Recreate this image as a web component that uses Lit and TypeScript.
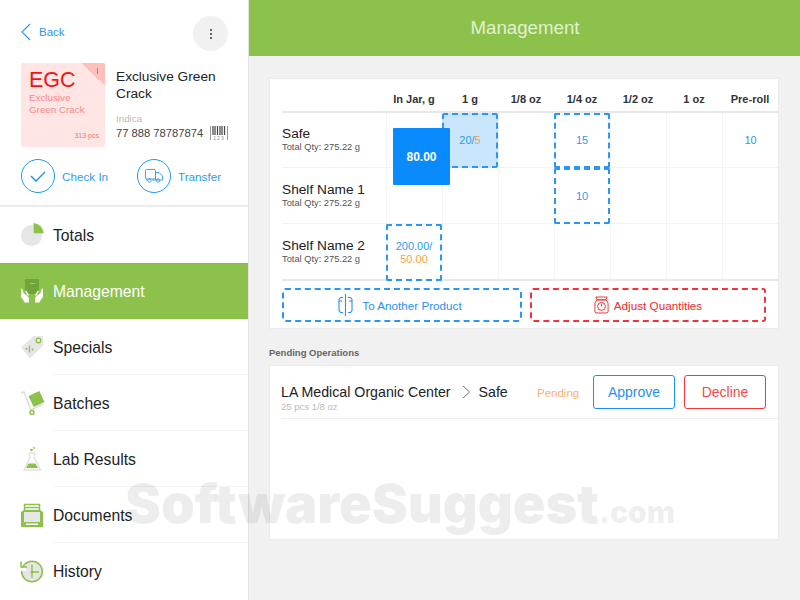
import { LitElement, html, css, svg } from "lit";
import { customElement } from "lit/decorators.js";

const icons: Record<string, unknown> = {
  totals: svg`<circle cx="11.5" cy="13.5" r="10.5" fill="#e6e6e6"/><path d="M13 1.500a10.500 10.500 0 0 1 10 10.500H13z" fill="#fff"/><path d="M13.500 1a10.500 10.500 0 0 1 10 10.500h-10z" fill="#8cc24b"/>`,
  management: svg`<rect x="5" y="1" width="14" height="15" fill="#6ea63a"/><rect x="10" y="5" width="5" height="1" fill="#9cc872"/>
    <path d="M1 10.500 2.500 11l1 4 3.500 2.500 2 2.500v4.500H4.500l-1.500-3-2-2.500z" fill="#fff"/><path d="M5 13.500l1.200-1 2.800 4.500-1.200.8z" fill="#fff"/>
    <path d="M23 10.500 21.500 11l-1 4-3.500 2.500-2 2.500v4.500h4.500l1.500-3 2-2.500z" fill="#fff"/><path d="M19 13.500l-1.200-1-2.800 4.500 1.200.8z" fill="#fff"/>`,
  specials: svg`<path d="M1 13.500 13.500 2h9.500v9.500L10 24.500z" fill="#e6e6e6"/><circle cx="18.500" cy="6.500" r="2.200" fill="#fff" stroke="#8cc24b" stroke-width="1.500"/>
    <path d="M9.500 11.500v7" stroke="#8cc24b" stroke-width="1.200"/><circle cx="6.500" cy="14.800" r="1" fill="#8cc24b"/><circle cx="12.500" cy="15.500" r="1" fill="#8cc24b"/>`,
  batches: svg`<path d="M1 3l3-1 7 18 12-6" fill="none" stroke="#dcdcdc" stroke-width="1.500"/><rect x="10.500" y="3" width="12" height="12" fill="#8cc24b" transform="rotate(-25 16.500 9)"/><circle cx="12" cy="22.500" r="2" fill="#fff" stroke="#8cc24b" stroke-width="1.500"/>`,
  lab: svg`<path d="M9.500 7h5v5l6 12H4l5.500-11.500z" fill="#fff" stroke="#e2e2e2" stroke-width="1.500"/><path d="M8.500 17.500h7l2.500 4.500H6z" fill="#8cc24b"/><circle cx="11.500" cy="4" r="1.300" fill="#8cc24b"/><circle cx="14" cy="2" r="0.900" fill="#8cc24b"/>`,
  documents: svg`<path d="M4.500 2.500h15v6h-15z" fill="#fff" stroke="#8cc24b" stroke-width="1.500"/><path d="M4.500 5.500h15" stroke="#8cc24b" stroke-width="1.500"/><path d="M1 10l3-2h16l3 2v15H1z" fill="#8cc24b"/><rect x="4" y="10" width="16" height="10" fill="#e6e6e6"/><rect x="6" y="21.500" width="12" height="1.500" fill="#fff"/>`,
  history: svg`<circle cx="12" cy="13.500" r="10.300" fill="#e6e6e6" stroke="#8cc24b" stroke-width="1.600"/><rect x="0" y="9.500" width="6" height="3.500" fill="#fff"/><path d="M12 6.500v7.500h7M12 14v6" fill="none" stroke="#8cc24b" stroke-width="1.300"/><circle cx="12" cy="14" r="1.500" fill="#8cc24b"/><path d="M1 3.500v5.500h6" fill="none" stroke="#8cc24b" stroke-width="1.500"/>`,
};

const nav = [
  ["totals", "Totals"],
  ["management", "Management"],
  ["specials", "Specials"],
  ["batches", "Batches"],
  ["lab", "Lab Results"],
  ["documents", "Documents"],
  ["history", "History"],
];

const columns = ["In Jar, g", "1 g", "1/8 oz", "1/4 oz", "1/2 oz", "1 oz", "Pre-roll"];

type Cell = { a?: string; b?: string; sep?: string; dash?: boolean; fill?: boolean };
const rows: { name: string; cells: Cell[] }[] = [
  { name: "Safe", cells: [{}, { a: "20", sep: "/", b: "5", dash: true, fill: true }, {}, { a: "15", dash: true }, {}, {}, { a: "10" }] },
  { name: "Shelf Name 1", cells: [{}, {}, {}, { a: "10", dash: true }, {}, {}, {}] },
  { name: "Shelf Name 2", cells: [{ a: "200.00/", b: "50.00", dash: true }, {}, {}, {}, {}, {}, {}] },
];

@customElement("app-root")
export class AppRoot extends LitElement {
  static styles = css`
    :host { display: block; width: 800px; height: 600px; overflow: hidden; position: relative; font-family: "Liberation Sans", Arial, sans-serif; color: #222; background: #f1f1f1; }
    * { box-sizing: border-box; }
    .page { display: flex; height: 600px; }
    .side { width: 249px; flex: none; background: #fff; border-right: 1px solid #e4e4e4; display: flex; flex-direction: column; }
    .hero { height: 207px; border-bottom: 2px solid #ececec; padding: 16px 20px 0 21px; display: flex; flex-direction: column; }
    .top { display: flex; justify-content: space-between; align-items: center; height: 35px; }
    .back { display: flex; align-items: center; gap: 8px; color: #2a96f2; font-size: 11.500px; margin-top: -3px; }
    .more { width: 35px; height: 35px; border-radius: 50%; background: #f1f1f1; display: flex; align-items: center; justify-content: center; }
    .product { display: flex; gap: 11px; margin-top: 12px; }
    .tile { width: 84px; height: 84px; background: #ffe5e3; border-radius: 2px; position: relative; overflow: hidden; padding: 6px 0 0 8px; color: #f98888; font-size: 9.800px; line-height: 12px; flex: none; }
    .tile b { display: block; font-weight: 400; font-size: 21.500px; line-height: 23px; color: #f01414; }
    .corner { position: absolute; top: 0; right: 0; width: 23px; height: 23px; background: linear-gradient(45deg, transparent 50%, #ffbfba 50%); }
    .corner::after { content: ""; position: absolute; left: 15px; top: 5px; width: 1px; height: 6px; background: #e86a6a; }
    .pcs { position: absolute; right: 6px; bottom: 7px; font-size: 7px; line-height: 8px; color: #f07a7a; }
    .info { display: flex; flex-direction: column; width: 114px; }
    .pname { font-size: 13.700px; line-height: 17px; margin-top: 5px; color: #222; }
    .kind { font-size: 9.800px; color: #b9b9b9; margin-top: 11px; line-height: 12px; }
    .code { display: flex; align-items: center; gap: 7px; font-size: 11.200px; color: #444; margin-top: 1px; white-space: nowrap; }
    .actions { display: flex; margin-top: 12px; }
    .action { display: flex; align-items: center; gap: 7px; color: #2a9df0; font-size: 11.700px; flex: 0 0 116px; }
    .ring { width: 34px; height: 34px; border: 1px solid #1a9bf5; border-radius: 50%; display: flex; align-items: center; justify-content: center; flex: none; }
    .nav { flex: 1; }
    .item { height: 56px; display: flex; align-items: center; padding: 2px 0 0 20px; font-size: 15.700px; color: #222; position: relative; }
    .item svg { flex: none; margin: -2px 7px 0 0; }
    .item.sep::after { content: ""; position: absolute; left: 54px; right: 0; bottom: 0; height: 1px; background: #f3f3f3; }
    .item.on { background: #8cc24b; color: #fff; border-block: 1px solid #86c03f; }
    .main { flex: 1; display: flex; flex-direction: column; }
    .bar { height: 56px; background: #8cc24b; color: #e2f0cf; font-size: 18.700px; display: flex; align-items: center; justify-content: center; }
    .body { padding: 22px 22px 0 20px; display: flex; flex-direction: column; }
    .card { background: #fff; border: 1px solid #ebebeb; }
    .grid { display: grid; grid-template-columns: 104px repeat(7, 56px); grid-template-rows: 34px 55px 56px 57px; margin: 0 -1px 0 12px; position: relative; }
    .head { font-size: 11px; font-weight: 700; display: flex; align-items: center; justify-content: center; color: #333; border-bottom: 2px solid #e8e8e8; padding-top: 8px; }
    .label { padding-top: 15px; font-size: 13.700px; line-height: 14px; color: #222; border-bottom: 1px solid #f3f3f3; }
    .label.first { padding-top: 14px; }
    .label small { display: block; font-size: 9.300px; line-height: 12px; color: #555; }
    .cell { border-left: 1px solid #f3f3f3; border-bottom: 1px solid #f3f3f3; font-size: 11px; line-height: 13px; color: #2a9cf0; display: flex; align-items: center; justify-content: center; text-align: center; }
    .row3 { border-bottom: 2px solid #e8e8e8; }
    .cell.dash { border: 2px dashed #2a96f5; border-radius: 2px; }
    .cell.fill { background: #c9e6fd; }
    .cell i { font-style: normal; color: #f9a23c; }
    .chip { position: absolute; left: 111px; top: 49px; width: 57px; height: 57px; background: #0a8bfd; color: #fff; font-size: 12px; font-weight: 700; display: flex; align-items: center; justify-content: center; border-radius: 1px; }
    .btns { display: flex; gap: 8px; padding: 7px 12px 6px; }
    .btn { height: 34px; border: 2px dashed #2a96f5; border-radius: 3px; color: #2a8ff0; font-size: 11.700px; display: flex; align-items: center; justify-content: center; gap: 9px; flex: none; }
    .btn.blue { width: 240px; padding-right: 4px; }
    .btn.red { width: 236px; border-color: #f5323c; color: #ef2a2a; gap: 5px; }
    .title { font-size: 9.500px; font-weight: 700; color: #666; margin: 18px 0 6px; line-height: 12px; }
    .pending { height: 175px; }
    .op { margin-left: 11px; height: 53px; border-bottom: 1px solid #efefef; display: flex; padding: 9px 11px 0 0; }
    .route { width: 256px; font-size: 14.200px; line-height: 16px; padding-top: 9px; color: #222; }
    .route span { display: flex; align-items: center; gap: 8px; white-space: nowrap; }
    .route .dest { margin-left: -1px; }
    .route small { display: block; font-size: 9.500px; line-height: 11px; color: #bbb; margin-top: 1px; }
    .status { width: 56px; font-size: 11.500px; color: #fbb06a; display: flex; align-items: center; height: 34px; padding-top: 1px; }
    .solid { width: 82px; height: 34px; border: 1.500px solid #1a8fff; border-radius: 3px; color: #2a8ff0; font-size: 14px; display: flex; align-items: center; justify-content: center; }
    .solid.no { border-color: #f5353d; color: #f24a4a; margin-left: 9px; }
    .mark { position: absolute; left: 125px; top: 472px; font-family: Inter, sans-serif; font-weight: 900; font-size: 54px; line-height: 64px; color: rgba(0, 0, 0, 0.07); white-space: nowrap; pointer-events: none; }
    .mark span { font-size: 30px; }
  `;

  render() {
    return html`
      <div class="page">
        <aside class="side">
          <div class="hero">
            <div class="top">
              <div class="back">
                <svg width="10" height="18" viewBox="0 0 10 18"><path d="M9 1 1 9l8 8" fill="none" stroke="#2a96f2" stroke-width="1.100"/></svg>
                Back
              </div>
              <div class="more">
                <svg width="4" height="12" viewBox="0 0 4 12"><g fill="#444"><circle cx="2" cy="2" r="1.100"/><circle cx="2" cy="6" r="1.100"/><circle cx="2" cy="10" r="1.100"/></g></svg>
              </div>
            </div>
            <div class="product">
              <div class="tile">
                <div class="corner"></div>
                <b>EGC</b>Exclusive<br />Green Crack
                <div class="pcs">313 pcs</div>
              </div>
              <div class="info">
                <div class="pname">Exclusive Green Crack</div>
                <div class="kind">Indica</div>
                <div class="code">77 888 78787874
                  <svg width="18" height="14" viewBox="0 0 18 14" style="flex:none"><path d="M.5 0v14M17.500 0v14" stroke="#999" fill="none"/><path d="M3 0v9M5 0v9M7.500 0v9M10 0v9M12 0v9M14.500 0v9" stroke="#444" stroke-width="1.200"/><text x="9" y="14" text-anchor="middle" font-size="5" letter-spacing="1" fill="#888">123</text></svg>
                </div>
              </div>
            </div>
            <div class="actions">
              <div class="action">
                <div class="ring"><svg width="16" height="11" viewBox="0 0 16 11"><path d="M1 5 6 10 15 1" fill="none" stroke="#1a8fee" stroke-width="1.400"/></svg></div>
                Check In
              </div>
              <div class="action">
                <div class="ring"><svg width="18" height="14" viewBox="0 0 18 14" fill="none" stroke="#2a9df0" stroke-width=".9"><rect x=".5" y=".5" width="10" height="9.500" rx="1"/><path d="M10.500 3.500h3.500l3.500 3.500v4h-7z"/><path d="M1 11h2M7 11h3"/><circle cx="4.500" cy="11.500" r="1.700"/><circle cx="13" cy="11.500" r="1.700"/></svg></div>
                Transfer
              </div>
            </div>
          </div>
          <nav class="nav">
            ${nav.map(
              ([key, label], i) => html`
                <div class="item ${key === "management" ? "on" : ""} ${i >= 2 && i < 6 ? "sep" : ""}">
                  <svg width="26" height="26" viewBox="0 0 26 26">${icons[key]}</svg>${label}
                </div>
              `
            )}
          </nav>
        </aside>
        <main class="main">
          <div class="bar">Management</div>
          <div class="body">
            <section class="card">
              <div class="grid">
                <div class="head"></div>
                ${columns.map((c) => html`<div class="head">${c}</div>`)}
                ${rows.map(
                  (r, ri) => html`
                    <div class="label ${ri === 0 ? "first" : ""} ${ri === 2 ? "row3" : ""}">${r.name}<small>Total Qty: 275.22 g</small></div>
                    ${r.cells.map(
                      (c) => html`
                        <div class="cell ${c.dash ? "dash" : ""} ${c.fill ? "fill" : ""} ${ri === 2 ? "row3" : ""}">
                          ${c.sep
                            ? html`<span>${c.a}${c.sep}<i>${c.b}</i></span>`
                            : c.b
                              ? html`<span>${c.a}<br /><i>${c.b}</i></span>`
                              : c.a}
                        </div>
                      `
                    )}
                  `
                )}
                <div class="chip">80.00</div>
              </div>
              <div class="btns">
                <div class="btn blue">
                  <svg width="15" height="22" viewBox="0 0 15 22" fill="none" stroke="#2a8ff0" stroke-width="1.100"><path d="M7.500 0v22"/><path d="M5 3.500H2.500L1 5.500v11l1.500 2H5M10 3.500h2.500l1.500 2v11l-1.500 2H10M1 7h3M11 7h3"/></svg>
                  To Another Product
                </div>
                <div class="btn red">
                  <svg width="15" height="18" viewBox="0 0 16 18" fill="none" stroke="#ef2a2a" stroke-width="1"><path d="M2 .5h12l-1.500 3h-9z"/><path d="M3 3.500 1 7v9l1 1.500h12l1-1.500V7l-2-3.500z"/><circle cx="8" cy="10.500" r="4.200"/><path d="M8 7.500v3"/></svg>
                  Adjust Quantities
                </div>
              </div>
            </section>
            <div class="title">Pending Operations</div>
            <section class="card pending">
              <div class="op">
                <div class="route">
                  <span>LA Medical Organic Center
                    <svg width="11" height="14" viewBox="0 0 11 14" style="margin:0 0 0 2px"><path d="m2 1 6.500 6L2 13" fill="none" stroke="#777" stroke-width="1"/></svg>
                    <span class="dest">Safe</span></span>
                  <small>25 pcs 1/8 oz</small>
                </div>
                <div class="status">Pending</div>
                <div class="solid">Approve</div>
                <div class="solid no">Decline</div>
              </div>
            </section>
          </div>
        </main>
      </div>
      <div class="mark">SoftwareSuggest<span>.com</span></div>
    `;
  }
}
